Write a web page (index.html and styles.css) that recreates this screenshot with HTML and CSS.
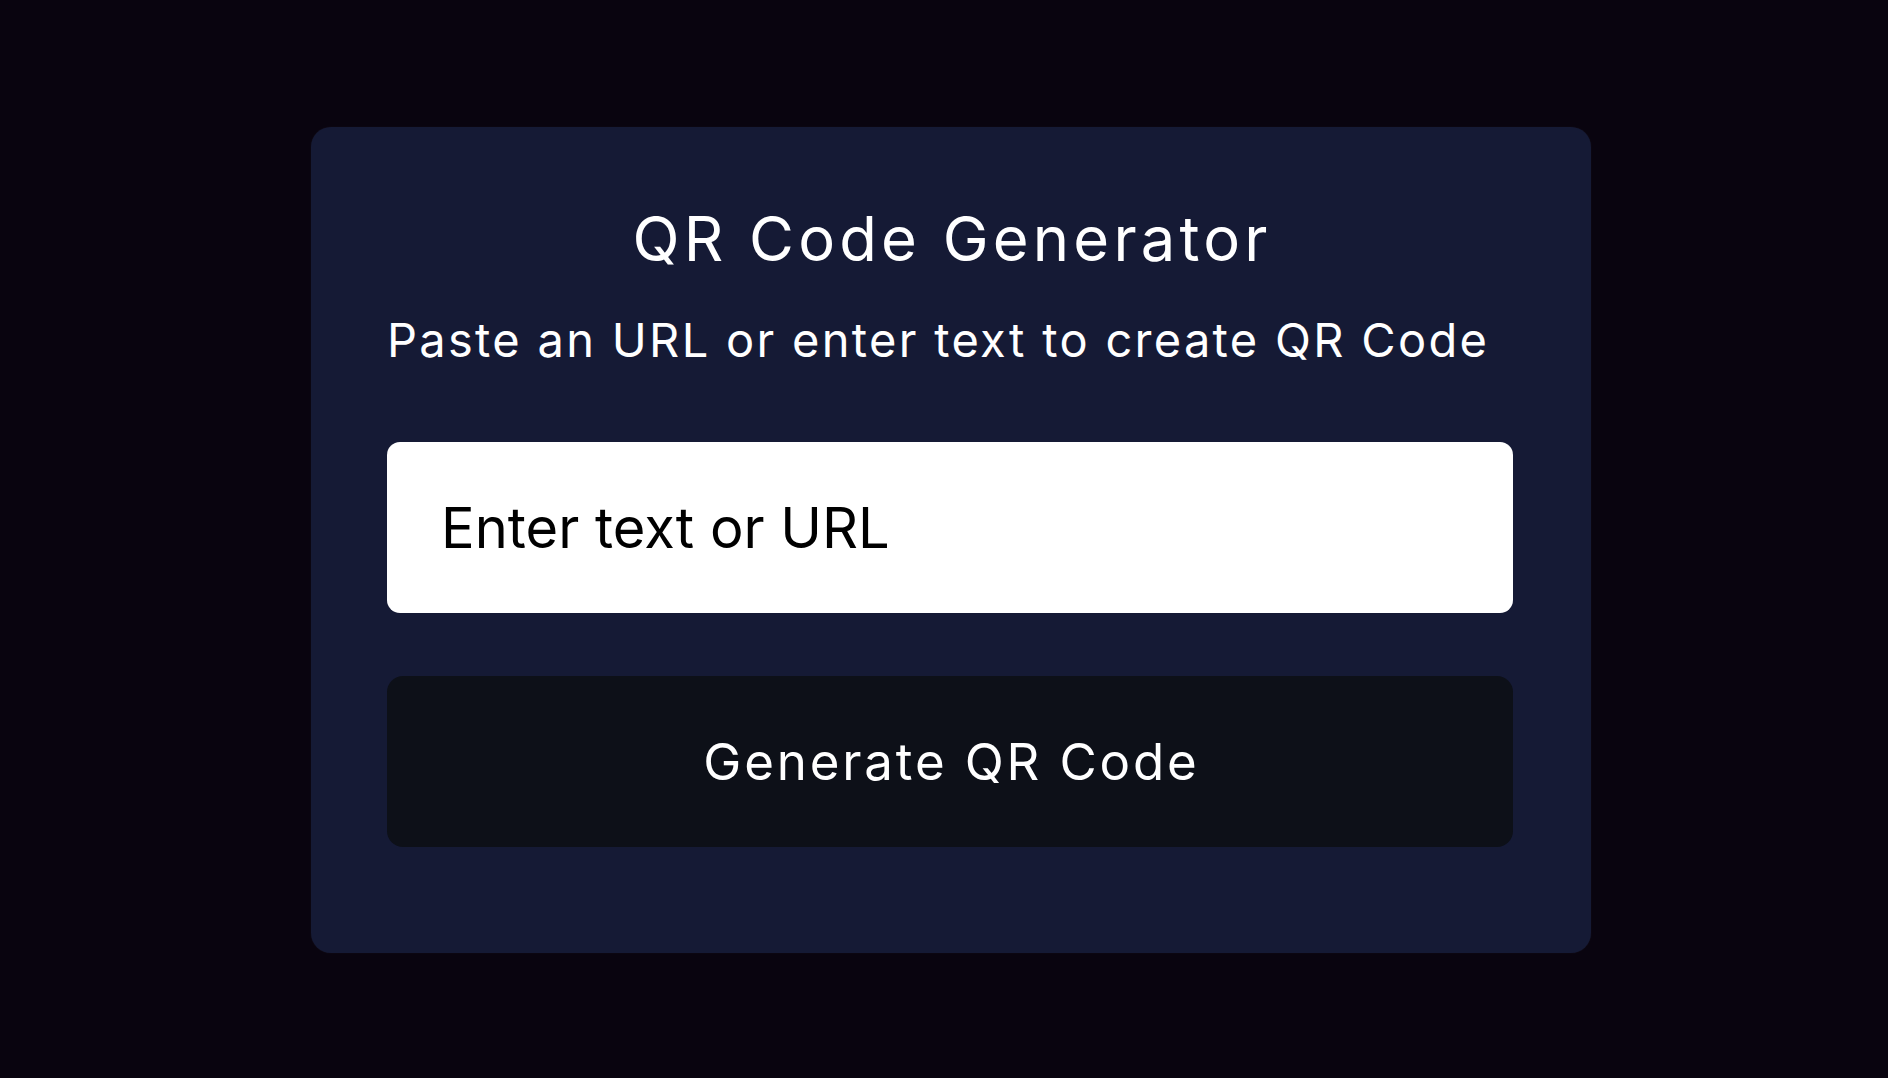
FILE: index.html
```
<!DOCTYPE html>
<html lang="en">
<head>
<meta charset="utf-8">
<title>QR Code Generator</title>
<link rel="stylesheet" href="styles.css">
</head>
<body>
<main class="page">
  <section class="card">
    <h1 class="title">QR Code Generator</h1>
    <p class="subtitle">Paste an URL or enter text to create QR Code</p>
    <input class="field" type="text" placeholder="Enter text or URL">
    <button class="generate" type="button">Generate QR Code</button>
  </section>
</main>
</body>
</html>
```
FILE: styles.css
```
* { box-sizing: border-box; }
html, body { margin: 0; padding: 0; }
body {
  background: #09040f;
  font-family: Inter, "Noto Sans", sans-serif;
  color: #fff;
}
.page {
  min-height: 100vh;
  display: flex;
  align-items: center;
  justify-content: center;
  padding: 2px 0 0 14px;
}
.card {
  width: 1280px;
  background: #151a35;
  border-radius: 20px;
  padding: 76px 78px 106px 76px;
  display: flex;
  flex-direction: column;
  box-shadow: 0 0 2px rgba(255,255,255,0.06);
}
.title {
  margin: 0;
  font-size: 61.5px;
  line-height: 72px;
  font-weight: 400;
  letter-spacing: 4.2px;
  padding-left: 4.2px;
  text-align: center;
}
.subtitle {
  margin: 37px 0 0;
  font-size: 47px;
  line-height: 56px;
  font-weight: 400;
  letter-spacing: 2.3px;
}
.field {
  margin: 74px 0 0;
  height: 171px;
  width: 100%;
  border: none;
  outline: none;
  border-radius: 13px;
  background: #fff;
  padding: 0 0 0 54px;
  font-family: Inter, "Noto Sans", sans-serif;
  font-size: 56px;
  color: #000;
}
.field::placeholder { color: #000; opacity: 1; }
.generate {
  margin: 63px 0 0;
  height: 171px;
  width: 100%;
  border: none;
  border-radius: 16px;
  background: #0d1018;
  color: #fff;
  font-family: Inter, "Noto Sans", sans-serif;
  font-size: 51px;
  font-weight: 400;
  letter-spacing: 2.85px;
  padding: 0 0 0 2.85px;
}
```
